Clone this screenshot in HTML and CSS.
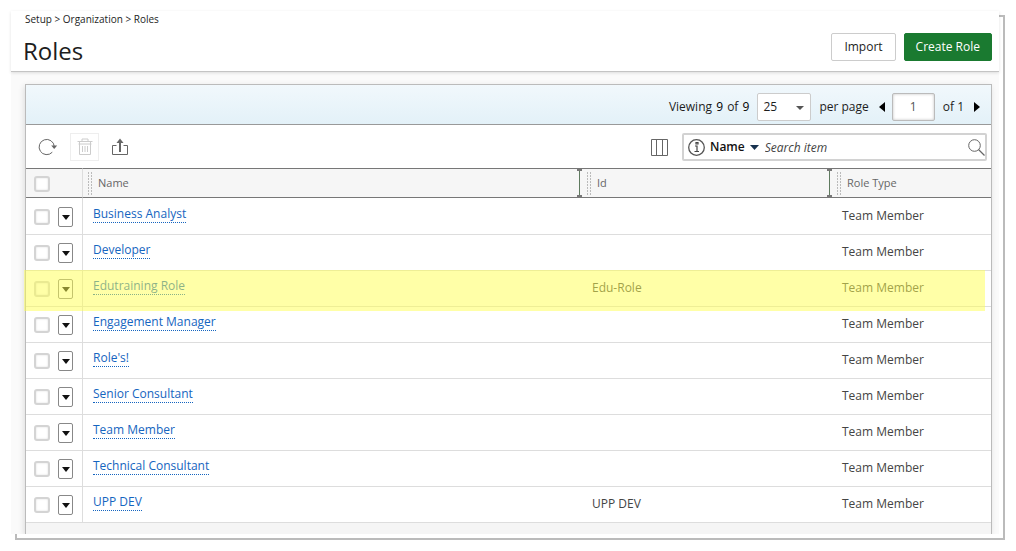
FILE: index.html
```html
<!DOCTYPE html>
<html lang="en">
<head>
<meta charset="utf-8">
<title>Roles</title>
<link rel="stylesheet" href="styles.css">
</head>
<body>
<div class="frame">
  <header class="page-head">
    <div>
      <nav class="crumbs" aria-label="Breadcrumb">Setup &gt; Organization &gt; Roles</nav>
      <h1 class="title">Roles</h1>
    </div>
    <div class="actions">
      <button class="btn" type="button">Import</button>
      <button class="btn btn-primary" type="button">Create Role</button>
    </div>
  </header>
  <main class="content">
    <section class="panel">
      <div class="pager">
        <span class="viewing">Viewing <span class="count">9</span> of <span class="count">9</span></span>
        <span class="select-wrap"><select class="size" id="size"><option>25</option><option>50</option></select></span>
        <label class="per-page" for="size">per page</label>
        <button class="page-btn" type="button" aria-label="Previous page"><svg width="6" height="10" viewBox="0 0 6 10"><path d="M6 0v10L0 5z"/></svg></button>
        <input class="page-no" type="text" value="1" aria-label="Page">
        <span class="of">of 1</span>
        <button class="page-btn" type="button" aria-label="Next page"><svg width="6" height="10" viewBox="0 0 6 10"><path d="M0 0v10l6-5z"/></svg></button>
      </div>
      <div class="tools">
        <button class="tool" type="button" aria-label="Refresh"><svg width="20" height="18" viewBox="0 0 20 18" class="line"><path d="M14.300 14.200A7.600 7.600 0 1 1 16.300 8.500"/><path class="solid" d="M13.200 7.500h6l-3 3.600z"/></svg></button>
        <button class="tool tool-off" type="button" aria-label="Delete" disabled><svg width="16" height="18" viewBox="0 0 16 18" class="line"><path d="M.5 3.500h15M5 3.500v-2.500h6v2.500M1.500 6h13M2.500 3.500v13h11v-13M5.500 8v6M8 8v6M10.500 8v6"/></svg></button>
        <button class="tool" type="button" aria-label="Export"><svg width="18" height="18" viewBox="0 0 18 18" class="line"><path d="M5.500 7.500h-4v9h15v-9h-4"/><path d="M9 14V3" stroke-width="2"/><path class="solid" d="M5.500 5L9 .5 12.500 5z"/></svg></button>
        <button class="tool columns" type="button" aria-label="Columns"><svg width="17" height="17" viewBox="0 0 17 17" class="line"><path d="M.5.5h16v16H.5zM5.500.5v16M11.500.5v16"/></svg></button>
        <div class="search">
          <button class="search-by" type="button">
            <svg width="17" height="17" viewBox="0 0 17 17" class="info"><circle cx="8.500" cy="8.500" r="7.800"/><path d="M7 7h2v5.500M6.500 12.500h4.500M8 3.500h2v1.500H8z"/></svg>
            <span>Name</span>
            <svg width="9" height="5" viewBox="0 0 9 5"><path d="M0 0h9L4.500 5z" fill="#17324f"/></svg>
          </button>
          <input class="search-text" type="text" placeholder="Search item" aria-label="Search item">
          <button class="search-go" type="button" aria-label="Search"><svg width="17" height="17" viewBox="0 0 17 17" class="line"><circle cx="6.500" cy="6.500" r="5.800"/><path d="M10.500 10.500l6 6" stroke-width="1.300"/></svg></button>
        </div>
      </div>
      <table class="grid">
        <colgroup><col class="c-pick"><col><col class="c-id"><col class="c-type"></colgroup>
        <thead>
          <tr>
            <th class="pick"><input type="checkbox" class="box" aria-label="Select all"></th>
            <th><div class="th"><i class="grip"></i><span>Name</span><i class="resizer"></i></div></th>
            <th><div class="th"><i class="grip"></i><span>Id</span><i class="resizer"></i></div></th>
            <th><div class="th"><i class="grip"></i><span>Role Type</span></div></th>
          </tr>
        </thead>
        <tbody>
          <tr><td class="pick"><div class="pair"><input type="checkbox" class="box" aria-label="Select Business Analyst"><button class="menu" type="button" aria-label="Actions"></button></div></td><td><a class="link" href="#">Business Analyst</a></td><td></td><td>Team Member</td></tr>
          <tr><td class="pick"><div class="pair"><input type="checkbox" class="box" aria-label="Select Developer"><button class="menu" type="button" aria-label="Actions"></button></div></td><td><a class="link" href="#">Developer</a></td><td></td><td>Team Member</td></tr>
          <tr class="marked"><td class="pick"><div class="pair"><input type="checkbox" class="box" aria-label="Select Edutraining Role"><button class="menu" type="button" aria-label="Actions"></button></div></td><td><a class="link" href="#">Edutraining Role</a></td><td>Edu-Role</td><td>Team Member</td></tr>
          <tr><td class="pick"><div class="pair"><input type="checkbox" class="box" aria-label="Select Engagement Manager"><button class="menu" type="button" aria-label="Actions"></button></div></td><td><a class="link" href="#">Engagement Manager</a></td><td></td><td>Team Member</td></tr>
          <tr><td class="pick"><div class="pair"><input type="checkbox" class="box" aria-label="Select Role's!"><button class="menu" type="button" aria-label="Actions"></button></div></td><td><a class="link" href="#">Role's!</a></td><td></td><td>Team Member</td></tr>
          <tr><td class="pick"><div class="pair"><input type="checkbox" class="box" aria-label="Select Senior Consultant"><button class="menu" type="button" aria-label="Actions"></button></div></td><td><a class="link" href="#">Senior Consultant</a></td><td></td><td>Team Member</td></tr>
          <tr><td class="pick"><div class="pair"><input type="checkbox" class="box" aria-label="Select Team Member"><button class="menu" type="button" aria-label="Actions"></button></div></td><td><a class="link" href="#">Team Member</a></td><td></td><td>Team Member</td></tr>
          <tr><td class="pick"><div class="pair"><input type="checkbox" class="box" aria-label="Select Technical Consultant"><button class="menu" type="button" aria-label="Actions"></button></div></td><td><a class="link" href="#">Technical Consultant</a></td><td></td><td>Team Member</td></tr>
          <tr><td class="pick"><div class="pair"><input type="checkbox" class="box" aria-label="Select UPP DEV"><button class="menu" type="button" aria-label="Actions"></button></div></td><td><a class="link" href="#">UPP DEV</a></td><td>UPP DEV</td><td>Team Member</td></tr>
        </tbody>
      </table>
      <div class="panel-foot"></div>
    </section>
  </main>
</div>
</body>
</html>
```
FILE: styles.css
```css
* { box-sizing: border-box; }
body {
  margin: 0;
  padding: 11px 17px 11px 11px;
  background: #fff;
  color: #1d1d1d;
  font: 12px/16px "Open Sans", "Noto Sans", sans-serif;
}
button, input, select { font: inherit; color: inherit; margin: 0; }
button { padding: 0; border: 0; background: none; }
svg { display: block; }

.frame { position: relative; background: #fff; z-index: 0; }
/* offset outline that shows past the right and bottom edges */
.frame::before {
  content: "";
  position: absolute;
  z-index: -1;
  inset: 4px -6px -6px 4px;
  border: 2px solid #bbb;
}

.page-head {
  position: relative;
  display: flex;
  justify-content: space-between;
  height: 61px;
  padding: 0 7px 0 12px;
  background: #fff;
  border-bottom: 1px solid #c4c4c4;
  box-shadow: 0 1px 3px rgba(0, 0, 0, .12);
}
.crumbs { padding: 0 2px; font-size: 10px; }
.title { margin: 8px 0 0; font-size: 24px; line-height: 32px; font-weight: 400; }
.actions { display: flex; gap: 8px; padding-top: 22px; }
.btn {
  height: 28px;
  padding: 0 12px;
  border: 1px solid #ccc;
  border-radius: 2px;
  background: #fff;
}
.btn-primary { padding: 0 11px; border-color: #1a7a30; background: #1a7a30; color: #fff; }

.content { padding: 12px 7px 0 14px; background: #fafafa; overflow: hidden; }
.panel {
  border: 1px solid #bbb;
  border-bottom: 0;
  background: #fff;
  box-shadow: -1px 2px 6px rgba(0, 0, 0, .12);
}

.pager {
  display: flex;
  align-items: center;
  justify-content: flex-end;
  height: 40px;
  padding: 4px 11px 0 0;
  border-bottom: 1px solid #999;
  background: linear-gradient(#f1f8fc, #e3f1f8);
}
.count { margin: 0 1px; color: #000; font-weight: 500; }
.select-wrap { position: relative; margin-left: 7px; }
.select-wrap::after {
  content: "";
  position: absolute;
  right: 7px;
  top: 13px;
  border: 4px solid transparent;
  border-top-color: #555;
  border-bottom: 0;
}
.size {
  display: block;
  appearance: none;
  width: 54px;
  height: 28px;
  padding: 0 5px;
  border: 1px solid #ccc;
  border-radius: 2px;
  background: #fff;
}
.per-page { margin: 0 10px 0 8px; }
.page-no {
  width: 43px;
  height: 28px;
  margin: 0 8px 0 7px;
  border: 1px solid #bbb;
  border-radius: 2px;
  background: #fff;
  box-shadow: inset 0 0 3px rgba(0, 0, 0, .25);
  color: #555;
  text-align: center;
}
.of { margin-right: 10px; }

.tools { display: flex; align-items: center; height: 43px; padding: 1px 4px 0 7px; }
.tool {
  display: flex;
  align-items: center;
  justify-content: center;
  width: 29px;
  height: 28px;
  margin-right: 8px;
}
.tool-off { margin-right: 6px; border: 1px solid #eee; }
.line { fill: none; stroke: #666; stroke-width: 1; }
.line .solid { fill: #666; stroke: none; }
.tool-off .line { stroke: #ccc; }
.columns { margin: 0 8px 0 auto; }
.search {
  display: flex;
  align-items: center;
  width: 305px;
  height: 28px;
  padding: 0 0 0 4px;
  border: 2px solid #d2d2d2;
  border-radius: 2px;
}
.search-by { display: flex; align-items: center; gap: 5px; font-weight: 600; color: #111; }
.info { fill: none; stroke: #555; stroke-width: 1.3; }
.info path { stroke: #444; stroke-width: 1.2; }
.search-text {
  flex: 1;
  min-width: 0;
  height: 22px;
  padding: 0 6px;
  border: 0;
  outline: 0;
  background: none;
}
.search-text::placeholder { color: #444; font-style: italic; opacity: 1; }

.grid { width: 100%; table-layout: fixed; border-collapse: separate; border-spacing: 0; }
.c-pick { width: 57px; }
.c-id { width: 250px; }
.c-type { width: 159px; }
.grid th {
  height: 30px;
  padding: 0 0 0 5px;
  border-top: 1px solid #777;
  border-bottom: 1px solid #777;
  background: #f6f6f6;
  color: #666;
  font-size: 11px;
  font-weight: 400;
  text-align: left;
}
.th { display: flex; align-items: center; height: 28px; }
.grip {
  width: 5px;
  height: 24px;
  margin-right: 5px;
  background:
    repeating-linear-gradient(#f6f6f6 0 1px, transparent 1px 3px),
    linear-gradient(90deg, #bbb 0 1px, transparent 1px 3px, #bbb 3px 4px, transparent 4px);
}
.resizer {
  width: 5px;
  height: 28px;
  margin: 0 0 0 auto;
  background:
    linear-gradient(#777, #777) center top / 5px 2px no-repeat,
    linear-gradient(#777, #777) center bottom / 5px 2px no-repeat,
    linear-gradient(#5f7a5f, #5f7a5f) center / 1px 100% no-repeat;
}
.grid td {
  height: 36px;
  padding: 0 0 1px 10px;
  border-bottom: 1px solid #ddd;
  color: #444;
}
.grid .pick { padding: 1px 0 0 8px; border-right: 1px solid #ddd; }
.grid tbody tr:first-child td { height: 37px; padding-top: 1px; }
.grid tbody tr:first-child .pick { padding-top: 2px; }
.pair { display: flex; align-items: center; gap: 8px; }
.box {
  appearance: none;
  display: block;
  width: 16px;
  height: 16px;
  border: 2px solid #d4d4d4;
  border-radius: 3px;
  background: #fff;
  box-shadow: inset 0 0 2px rgba(0, 0, 0, .15);
}
.menu {
  display: flex;
  align-items: center;
  justify-content: center;
  width: 15px;
  height: 20px;
  border: 1px solid #888;
  border-radius: 2px;
  background: #fff;
}
.menu::before { content: ""; border: 4px solid transparent; border-top: 5px solid #111; border-bottom: 0; }
.link {
  display: inline-block;
  margin-bottom: 3px;
  border-bottom: 1px dotted #1565c0;
  color: #1565c0;
  text-decoration: none;
  vertical-align: middle;
}
.marked { position: relative; }
/* translucent highlight laid over the whole row */
.marked .pick::after {
  content: "";
  position: absolute;
  inset: -1px 6px -4px -2px;
  background: rgba(255, 255, 80, .5);
  pointer-events: none;
}
.panel-foot { height: 11px; background: #f5f5f5; }
```
